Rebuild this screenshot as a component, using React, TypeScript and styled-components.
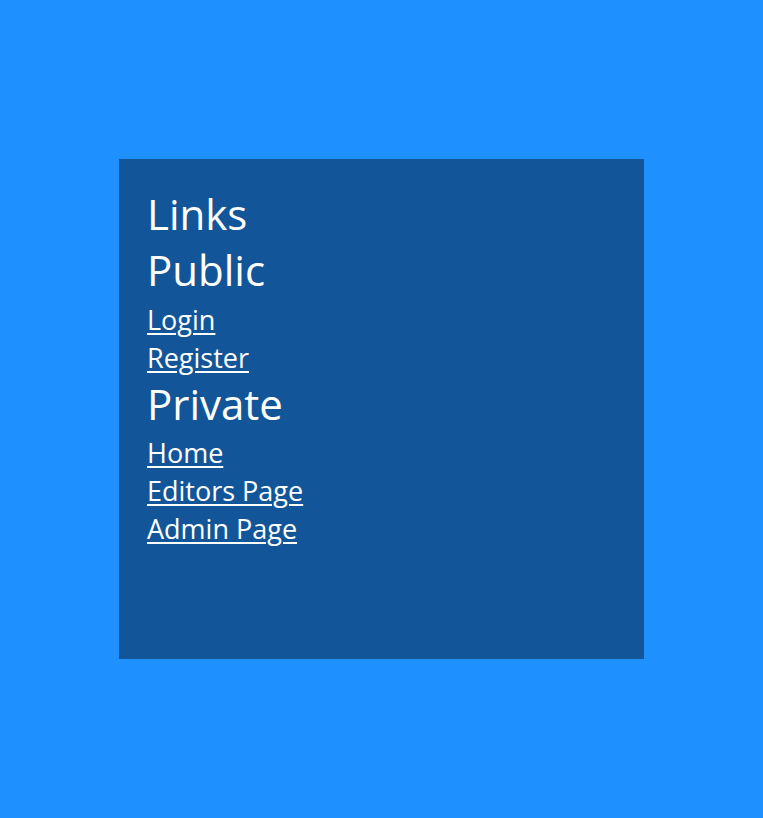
import React from "react";
import styled, { createGlobalStyle } from "styled-components";

const GlobalStyle = createGlobalStyle`
  * { box-sizing: border-box; }
  html, body { margin: 0; padding: 0; }
  body {
    min-height: 100vh;
    background-color: #1e90ff;
    font-family: "Open Sans", "Noto Sans", sans-serif;
    color: #fff;
  }
`;

const Page = styled.main`
  min-height: 100vh;
  display: flex;
  align-items: center;
  justify-content: center;
`;

const Panel = styled.section`
  width: 525px;
  height: 500px;
  padding: 27px 28px;
  background-color: rgba(0, 0, 0, 0.4);
  display: flex;
  flex-direction: column;
  align-items: flex-start;
`;

const Heading = styled.h2<{ $top?: number; $bottom?: number }>`
  margin: ${(p) => p.$top ?? 0}px 0 ${(p) => p.$bottom ?? 0}px;
  font-size: 42px;
  line-height: 56px;
  font-weight: 400;
`;

const NavLink = styled.a`
  font-size: 27px;
  line-height: 38px;
  color: #fff;
  text-decoration: underline;
  text-underline-offset: 3px;
  text-decoration-thickness: 1.5px;
`;

export default function App() {
  return (
    <>
      <GlobalStyle />
      <Page>
        <Panel>
          <Heading>Links</Heading>
          <Heading $bottom={3}>Public</Heading>
          <NavLink href="#login">Login</NavLink>
          <NavLink href="#register">Register</NavLink>
          <Heading $top={-1} $bottom={2}>Private</Heading>
          <NavLink href="#home">Home</NavLink>
          <NavLink href="#editors">Editors Page</NavLink>
          <NavLink href="#admin">Admin Page</NavLink>
        </Panel>
      </Page>
    </>
  );
}
